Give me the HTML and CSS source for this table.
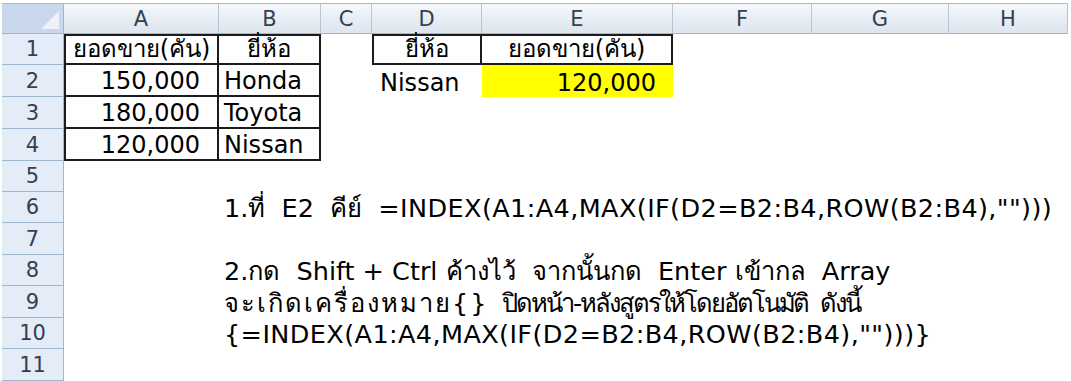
FILE: index.html
```html
<!DOCTYPE html>
<html lang="th">
<head>
<meta charset="utf-8">
<title>INDEX MAX IF</title>
<link rel="stylesheet" href="styles.css">
</head>
<body>
<div class="sheet">
  <div class="corner"><span class="tri"></span></div>
  <div class="ch">A</div>
  <div class="ch">B</div>
  <div class="ch">C</div>
  <div class="ch">D</div>
  <div class="ch">E</div>
  <div class="ch">F</div>
  <div class="ch">G</div>
  <div class="ch">H</div>

  <div class="rh">1</div>
  <div class="c bd bt bl center">ยอดขาย(คัน)</div>
  <div class="c bd bt center">ยี่ห้อ</div>
  <div class="c"></div>
  <div class="c bd bt bl center">ยี่ห้อ</div>
  <div class="c bd bt center">ยอดขาย(คัน)</div>
  <div class="c span3"></div>

  <div class="rh">2</div>
  <div class="c bd bl num">150,000</div>
  <div class="c bd">Honda</div>
  <div class="c"></div>
  <div class="c indent">Nissan</div>
  <div class="c yellow num">120,000</div>
  <div class="c span3"></div>

  <div class="rh">3</div>
  <div class="c bd bl num">180,000</div>
  <div class="c bd">Toyota</div>
  <div class="c span6"></div>

  <div class="rh">4</div>
  <div class="c bd bl num">120,000</div>
  <div class="c bd">Nissan</div>
  <div class="c span6"></div>

  <div class="rh">5</div>
  <div class="c span8"></div>

  <div class="rh">6</div>
  <div class="c"></div>
  <div class="c span7 note">1.ที่  E2  คีย์  <span class="f">=INDEX(A1:A4,MAX(IF(D2=B2:B4,ROW(B2:B4),"")))</span></div>

  <div class="rh">7</div>
  <div class="c span8"></div>

  <div class="rh">8</div>
  <div class="c"></div>
  <div class="c span7 note">2.กด  Shift + Ctrl ค้างไว้  จากนั้นกด  Enter เข้ากล  Array</div>

  <div class="rh">9</div>
  <div class="c"></div>
  <div class="c span7 note"><span class="wide">จะเกิดเครื่องหมาย{}</span><span class="gap"> </span><span class="tight">ปิดหน้า-หลังสูตรให้โดยอัตโนมัติ  ดังนี้</span></div>

  <div class="rh">10</div>
  <div class="c"></div>
  <div class="c span7 note"><span class="f">{=INDEX(A1:A4,MAX(IF(D2=B2:B4,ROW(B2:B4),"")))}</span></div>

  <div class="rh">11</div>
  <div class="c span8"></div>
</div>
</body>
</html>
```

FILE: styles.css
```css
html, body {
  margin: 0;
  padding: 0;
  background: #ffffff;
}

body {
  font-family: "DejaVu Sans", "Noto Sans", sans-serif;
  color: #000;
}

.sheet {
  display: grid;
  grid-template-columns: 62px 155px 102px 51px 110px 191px 139px 137px 119px;
  grid-template-rows: 31px 31px 32px 32px 32px 31px 31px 32px 31px 32px 31px 32px;
  margin: 3px 0 0 2px;
  width: 1066px;
}

.corner {
  position: relative;
  background: #c9d8ec;
  border-top: 1px solid #a9b9cc;
  border-right: 1px solid #9eb6ce;
  border-bottom: 1px solid #9eb6ce;
  box-sizing: border-box;
  overflow: hidden;
}

.corner .tri {
  position: absolute;
  right: 4px;
  bottom: 4px;
  width: 0;
  height: 0;
  border-left: 18px solid transparent;
  border-bottom: 18px solid #eef2f8;
}

.ch {
  display: flex;
  align-items: center;
  justify-content: center;
  padding-top: 1px;
  box-sizing: border-box;
  background: linear-gradient(#f6f8fb 0%, #e9eef5 45%, #dde5ef 100%);
  border-top: 1px solid #a9b9cc;
  border-right: 1px solid #b6c5d6;
  border-bottom: 1px solid #9eb6ce;
  font-size: 21px;
  color: #34404f;
}

.rh {
  display: flex;
  align-items: center;
  justify-content: center;
  box-sizing: border-box;
  background: #e4ecf7;
  border-right: 1px solid #9eb6ce;
  border-bottom: 1px solid #9eb6ce;
  font-size: 21px;
  color: #34404f;
}

.c {
  display: flex;
  align-items: flex-end;
  box-sizing: border-box;
  padding: 0 0 2px 5px;
  font-size: 24px;
  line-height: 1;
  white-space: pre;
  overflow: visible;
  min-width: 0;
}

.note {
  font-size: 25.5px;
}

.f {
  letter-spacing: 0.4px;
}

.wide {
  letter-spacing: 2px;
}

.gap {
  width: 14px;
}

.tight {
  letter-spacing: -2.1px;
}

.center {
  justify-content: center;
  padding-left: 0;
}

.num {
  justify-content: flex-end;
  padding-right: 17px;
  padding-left: 0;
}

.indent {
  padding-left: 8px;
}

.bd {
  border-right: 2px solid #1c1c1c;
  border-bottom: 2px solid #1c1c1c;
}

.bt {
  border-top: 2px solid #1c1c1c;
}

.bl {
  border-left: 2px solid #1c1c1c;
}

.yellow {
  background: #ffff00;
}

.span3 { grid-column: span 3; }
.span6 { grid-column: span 6; }
.span7 { grid-column: span 7; }
.span8 { grid-column: span 8; }
```
